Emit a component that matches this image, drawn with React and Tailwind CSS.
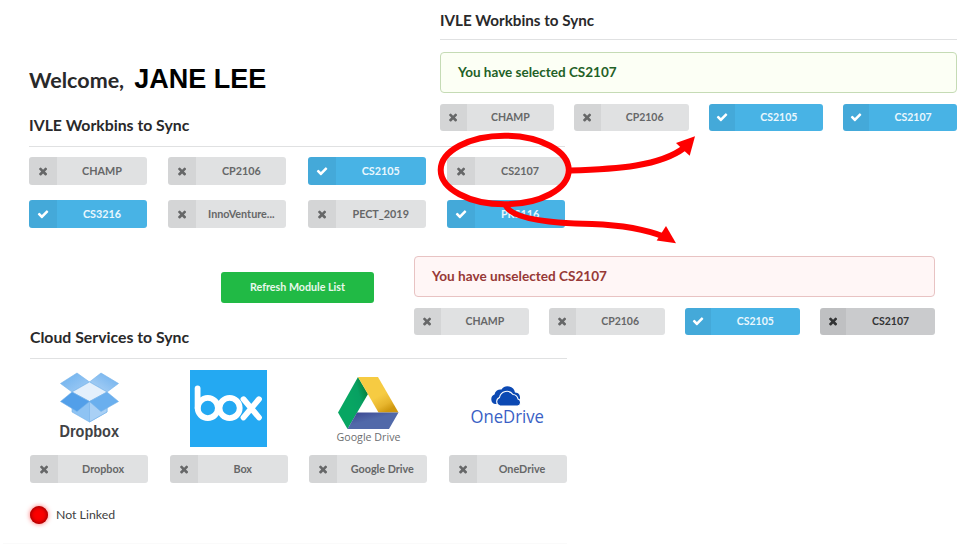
import React from "react";

const TIMES =
  "M1490 1322q0 40-28 68l-136 136q-28 28-68 28t-68-28l-294-294-294 294q-28 28-68 28t-68-28l-136-136q-28-28-28-68t28-68l294-294-294-294q-28-28-28-68t28-68l136-136q28-28 68-28t68 28l294 294 294-294q28-28 68-28t68 28l136 136q28 28 28 68t-28 68l-294 294 294 294q28 28 28 68z";
const CHECK =
  "M1671 566q0 40-28 68l-724 724-136 136q-28 28-68 28t-68-28l-136-136-362-362q-28-28-28-68t28-68l136-136q28-28 68-28t68 28l294 295 656-657q28-28 68-28t68 28l136 136q28 28 28 68z";

const tones = {
  off: "bg-[#e0e1e2] text-[#666768]",
  on: "bg-[#48b3e5] text-[#eaf7fd]",
  dark: "bg-[#cacbcd] text-[#333435]",
};

function Toggle({ label, tone = "off", compact = false }) {
  return (
    <button
      className={`flex w-full overflow-hidden rounded-[3px] font-bold ${
        compact ? "h-[27px] text-[10.5px]" : "h-7 text-[10.8px]"
      } ${tones[tone]}`}
    >
      <span
        className={`flex h-full shrink-0 items-center justify-center bg-black/5 ${
          compact ? "w-[26.5px]" : "w-7"
        }`}
      >
        <svg viewBox="0 0 1792 1792" className={`size-[12.2px] ${tone === "on" ? "text-white" : ""}`} fill="currentColor">
          <path d={tone === "on" ? CHECK : TIMES} />
        </svg>
      </span>
      <span className="flex h-full flex-1 items-center justify-center whitespace-nowrap pt-px">{label}</span>
    </button>
  );
}

function Heading({ children }) {
  return (
    <h2 className="h-[31px] whitespace-nowrap border-b border-[#e0e1e2] text-[15.8px] leading-[18px] font-bold text-[#29292a]">
      {children}
    </h2>
  );
}

function DropboxLogo() {
  return (
    <svg className="overflow-visible" width="59" height="72" viewBox="1 0 59 72">
      <defs>
        <linearGradient id="dbx" x1="0" y1="0" x2="1" y2="1">
          <stop offset="0" stopColor="#6bb0ee" />
          <stop offset="1" stopColor="#a3cdf5" />
        </linearGradient>
        <linearGradient id="dby" x1="1" y1="0" x2="0" y2="1">
          <stop offset="0" stopColor="#6aaeed" />
          <stop offset="1" stopColor="#b2d5f6" />
        </linearGradient>
      </defs>
      <g stroke="#73b1ea" strokeWidth="0.6">
        <path d="M13 33l17.5-5L48 33v7L30.500 50 13 40z" fill="#8ec3f3" />
        <path d="M30.500 29.500L48 33v7L30.500 50z" fill="#a9d0f5" />
        <path d="M18 1L1.500 11.500 13 20 30.500 10z" fill="url(#dbx)" />
        <path d="M42 1l17.500 10.500L48 20 30.500 10z" fill="url(#dby)" />
        <path d="M13 20L30.500 10 48 20 30.500 29.500z" fill="#e4f0fc" />
        <path d="M13 20L1.500 29.500 18 39.500l12.500-10z" fill="#529fe9" />
        <path d="M48 20l11.500 9.500L42 39.500l-11.500-10z" fill="#6aafee" />
      </g>
      <text x="0.500" y="65" textLength="59.500" lengthAdjust="spacingAndGlyphs" fontFamily="Liberation Sans" fontWeight="700" fontSize="17" fill="#414245">
        Dropbox
      </text>
    </svg>
  );
}

function BoxLogo() {
  return (
    <svg width="77" height="77" viewBox="0 0 77 77">
      <rect width="77" height="77" fill="#24a9f2" />
      <g fill="none" stroke="#fff" strokeWidth="5.800" strokeLinecap="round">
        <path d="M7.600 18.500V38" />
        <circle cx="17.800" cy="38" r="10.100" />
        <circle cx="39.600" cy="38" r="10.100" />
        <path d="M53.500 29.200l15.500 18.300M69 29.200L53.500 47.500" />
      </g>
    </svg>
  );
}

function DriveLogo() {
  return (
    <svg className="overflow-visible" width="65" height="70" viewBox="1 0 65 70">
      <defs>
        <linearGradient id="gdg" x1="0.4" y1="0.5" x2="1" y2="0.2">
          <stop offset="0" stopColor="#07a662" />
          <stop offset="0.5" stopColor="#07a062" />
          <stop offset="1" stopColor="#067a33" />
        </linearGradient>
        <linearGradient id="gdy" x1="0.4" y1="0.6" x2="0.65" y2="1">
          <stop offset="0" stopColor="#f6cb42" />
          <stop offset="0.6" stopColor="#e7b52d" />
          <stop offset="1" stopColor="#cf980f" />
        </linearGradient>
        <linearGradient id="gdb" x1="0" y1="0" x2="0.4" y2="0.5">
          <stop offset="0" stopColor="#39438f" />
          <stop offset="1" stopColor="#5169a9" />
        </linearGradient>
      </defs>
      <path d="M23 1l10 17L12.500 53 3 36.500z" fill="url(#gdg)" />
      <path d="M23 1h20l20.500 35.500H43.500z" fill="url(#gdy)" />
      <path d="M22 36.500h41.500L54 53H12.500z" fill="url(#gdb)" />
      <text x="1.500" y="65" textLength="64" lengthAdjust="spacingAndGlyphs" fontFamily="Open Sans" fontSize="11.200" fill="#6c6d6f">
        Google Drive
      </text>
    </svg>
  );
}

function OneDriveLogo() {
  return (
    <svg className="overflow-visible" width="76" height="44" viewBox="0 0 76 44">
      <g fill="#0c49b3" transform="translate(-1 0.500)">
        <path d="M26 16.500a5 5 0 0 1-.5-9.500 6 6 0 0 1 7-5A7.500 7.500 0 0 1 46 5c4 0 5 3 5 5v7z" />
        <path
          d="M31 18.500a4.500 4.500 0 0 1-.5-8.500 7.500 7.500 0 0 1 13.500-3 5.500 5.500 0 0 1 5 4.500 3.600 3.600 0 0 1-.5 7z"
          stroke="#fff"
          strokeWidth="1.100"
        />
      </g>
      <text x="0.500" y="36" textLength="73.500" lengthAdjust="spacingAndGlyphs" fontFamily="Open Sans" fontSize="18.500" fill="#3a5fc5">
        OneDrive
      </text>
    </svg>
  );
}

const modules = [
  ["CHAMP"],
  ["CP2106"],
  ["CS2105", "on"],
  ["CS2107"],
  ["CS3216", "on"],
  ["InnoVenture..."],
  ["PECT_2019"],
  ["PRS116", "on"],
];

function MessagePanel({ className, children, last }) {
  return (
    <>
      <div className={`flex h-[41px] items-center rounded-[4px] border pl-[17px] font-bold ${className}`}>
        {children}
      </div>
      <div className="mt-[11px] grid grid-cols-4 gap-x-5">
        <Toggle compact label="CHAMP" />
        <Toggle compact label="CP2106" />
        <Toggle compact label="CS2105" tone="on" />
        <Toggle compact label="CS2107" tone={last} />
      </div>
    </>
  );
}

function Annotations() {
  return (
    <svg className="pointer-events-none absolute top-0 left-0" width="962" height="545" viewBox="0 0 962 545">
      <g fill="none" stroke="#fe0000" strokeWidth="6">
        <ellipse cx="504.700" cy="170" rx="64" ry="34.300" />
        <path d="M570 170.500C618 169 660 166 684 148" />
        <path d="M506 206C512 218 545 223 592 224C620 225 645 229 665 237" />
      </g>
      <g fill="#fe0000">
        <path d="M695 136.300L689.700 155.700 684.500 151 676 143z" />
        <path d="M676 243.300L656.700 240.500 666 226z" />
      </g>
    </svg>
  );
}

export default function App() {
  return (
    <div className="relative grid h-[545px] w-[962px] grid-cols-1 overflow-hidden bg-white font-['Lato',sans-serif]">
      <main className="col-start-1 row-start-1 ml-[29px] w-[538px]">
        <div className="flex h-[116px] items-start pt-[65px]">
          <h1 className="text-[21.5px] leading-[31px] font-bold text-[#29292a]">Welcome,</h1>
          <span className="ml-[10px] pt-px font-['Liberation_Sans',Arial,sans-serif] text-[27px] leading-[27px] font-bold text-black">
            JANE LEE
          </span>
        </div>
        <div className="w-[536px]">
          <Heading>IVLE Workbins to Sync</Heading>
          <div className="mt-[10px] grid grid-cols-4 gap-x-[21.5px] gap-y-[15px]">
            {modules.map(([label, tone]) => (
              <Toggle key={label} label={label} tone={tone} />
            ))}
          </div>
        </div>
        <button className="mt-[44px] ml-[192px] flex h-[31px] w-[153px] items-center justify-center rounded-[3px] bg-[#21ba45] text-[10.7px] font-bold text-[#e9f8ec]">
          Refresh Module List
        </button>
        <section className="mt-[25px] ml-px w-[537px]">
          <Heading>Cloud Services to Sync</Heading>
          <div className="mt-[11px] grid h-[85px] grid-cols-4 gap-x-[21.5px]">
            <div className="flex justify-center pt-0.5">
              <DropboxLogo />
            </div>
            <div className="flex justify-center">
              <BoxLogo />
            </div>
            <div className="flex justify-center pt-[6px]">
              <DriveLogo />
            </div>
            <div className="flex justify-center pt-[17px]">
              <OneDriveLogo />
            </div>
          </div>
          <div className="grid grid-cols-4 gap-x-[21.5px]">
            <Toggle label="Dropbox" />
            <Toggle label="Box" />
            <Toggle label="Google Drive" />
            <Toggle label="OneDrive" />
          </div>
        </section>
        <div className="mt-[22px] flex items-center">
          <span className="ml-px size-[18px] rounded-full bg-[#fb0000] shadow-[0_0_5px_rgba(255,0,0,0.6),inset_0_0_4px_rgba(90,0,0,0.9)]" />
          <span className="ml-2 text-[12.3px] leading-5 text-[#414142]">Not Linked</span>
        </div>
        <div className="mt-[18px] -ml-[26px] h-px bg-[#fafafa]" />
      </main>
      <div className="col-start-1 row-start-1">
        <section className="ml-[440px] w-[517px] pt-[10px]">
          <div className="h-[42px]">
            <h2 className="h-[30px] border-b border-[#e0e1e2] text-[15.2px] leading-[20px] font-bold text-[#29292a]">
              IVLE Workbins to Sync
            </h2>
          </div>
          <MessagePanel className="border-[#c5dbb5] bg-[#fcfff5] text-[13.5px] text-[#1f6127]" last="on">
            You have selected CS2107
          </MessagePanel>
        </section>
        <section className="mt-[125px] ml-[414px] w-[521px]">
          <MessagePanel className="border-[#e8c3c3] bg-[#fff6f6] text-[13.6px] text-[#973937]" last="dark">
            You have unselected CS2107
          </MessagePanel>
        </section>
      </div>
      <Annotations />
    </div>
  );
}
